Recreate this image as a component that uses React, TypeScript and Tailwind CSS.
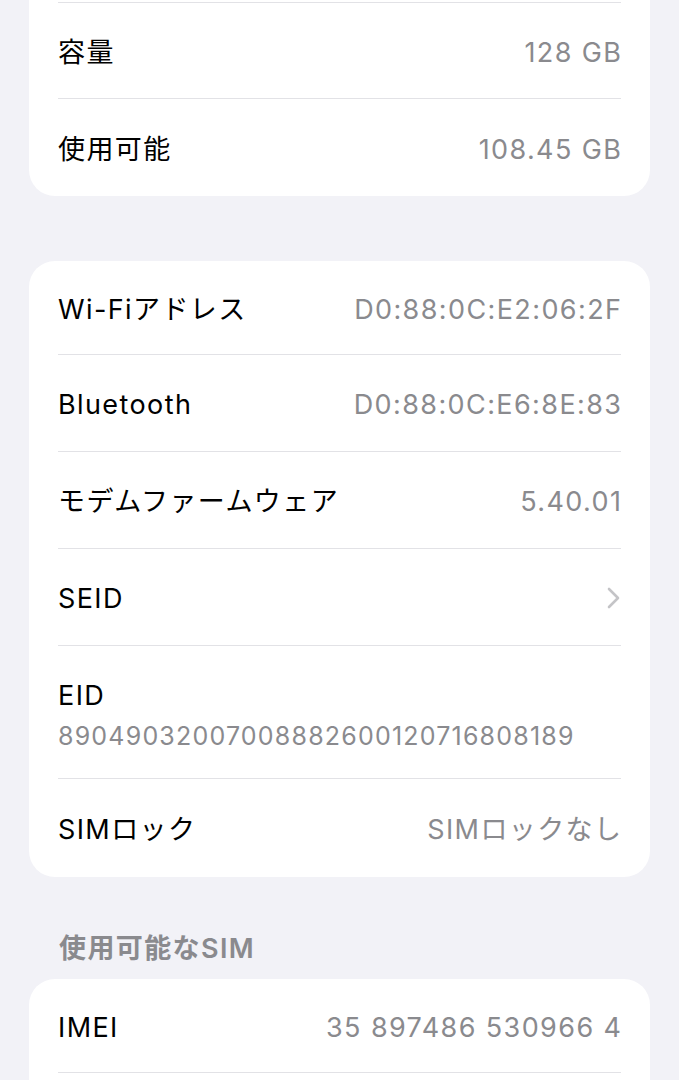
import { ReactNode } from "react";

const font = { fontFamily: '"Inter", "Noto Sans CJK JP", sans-serif' };

interface RowProps {
    label: string;
    value?: string;
    height: string;
    last?: boolean;
    chevron?: boolean;
}

const Row = ({ label, value, height, last, chevron }: RowProps) => (
    <div className={`flex items-center justify-between pt-[5px] ${height} ${last ? "" : "border-b border-[#e2e2e6]"}`}>
        <span className="text-[27px] text-black tracking-[1.4px]">{label}</span>
        {value && <span className="-mr-[1.4px] text-[27px] text-[#8a8a8e] tracking-[1.4px]">{value}</span>}
        {chevron && (
            <svg width="13" height="22" viewBox="0 0 13 22" fill="none" className="mr-[1px] -mt-[4px]">
                <path d="M2 2l9 9-9 9" stroke="#c4c4c7" strokeWidth="2.6" strokeLinecap="round" strokeLinejoin="round" />
            </svg>
        )}
    </div>
);

const Card = ({ children, className = "" }: { children: ReactNode; className?: string }) => (
    <div className={`mx-[29px] bg-white px-[29px] ${className}`}>{children}</div>
);

const App = () => {
    return (
        <div className="min-h-[1080px] h-[1080px] overflow-hidden bg-[#f2f2f7]" style={font}>
            <Card className="rounded-b-[26px]">
                <div className="h-[3px] border-b border-[#e2e2e6]" />
                <Row label="容量" value="128 GB" height="h-[96px]" />
                <Row label="使用可能" value="108.45 GB" height="h-[97px]" last />
            </Card>

            <Card className="mt-[65px] rounded-[26px]">
                <Row label="Wi-Fiアドレス" value="D0:88:0C:E2:06:2F" height="h-[94px]" />
                <Row label="Bluetooth" value="D0:88:0C:E6:8E:83" height="h-[97px]" />
                <Row label="モデムファームウェア" value="5.40.01" height="h-[97px]" />
                <Row label="SEID" height="h-[97px]" chevron />
                <div className="flex h-[133px] flex-col justify-center gap-[9px] border-b border-[#e2e2e6] pt-[6px]">
                    <span className="text-[27px] leading-[32px] text-black tracking-[1.4px]">EID</span>
                    <span className="text-[25px] leading-[30px] text-[#8a8a8e] tracking-[1.2px]">
                        89049032007008882600120716808189
                    </span>
                </div>
                <Row label="SIMロック" value="SIMロックなし" height="h-[98px]" last />
            </Card>

            <div className="px-[59px] pt-[56px] pb-[14px]">
                <span className="text-[27px] leading-[32px] font-semibold text-[#8a8a8e] tracking-[1.4px]">使用可能なSIM</span>
            </div>

            <Card className="rounded-t-[26px]">
                <Row label="IMEI" value="35 897486 530966 4" height="h-[94px]" />
                <div className="h-[60px]" />
            </Card>
        </div>
    );
};

export default App;
